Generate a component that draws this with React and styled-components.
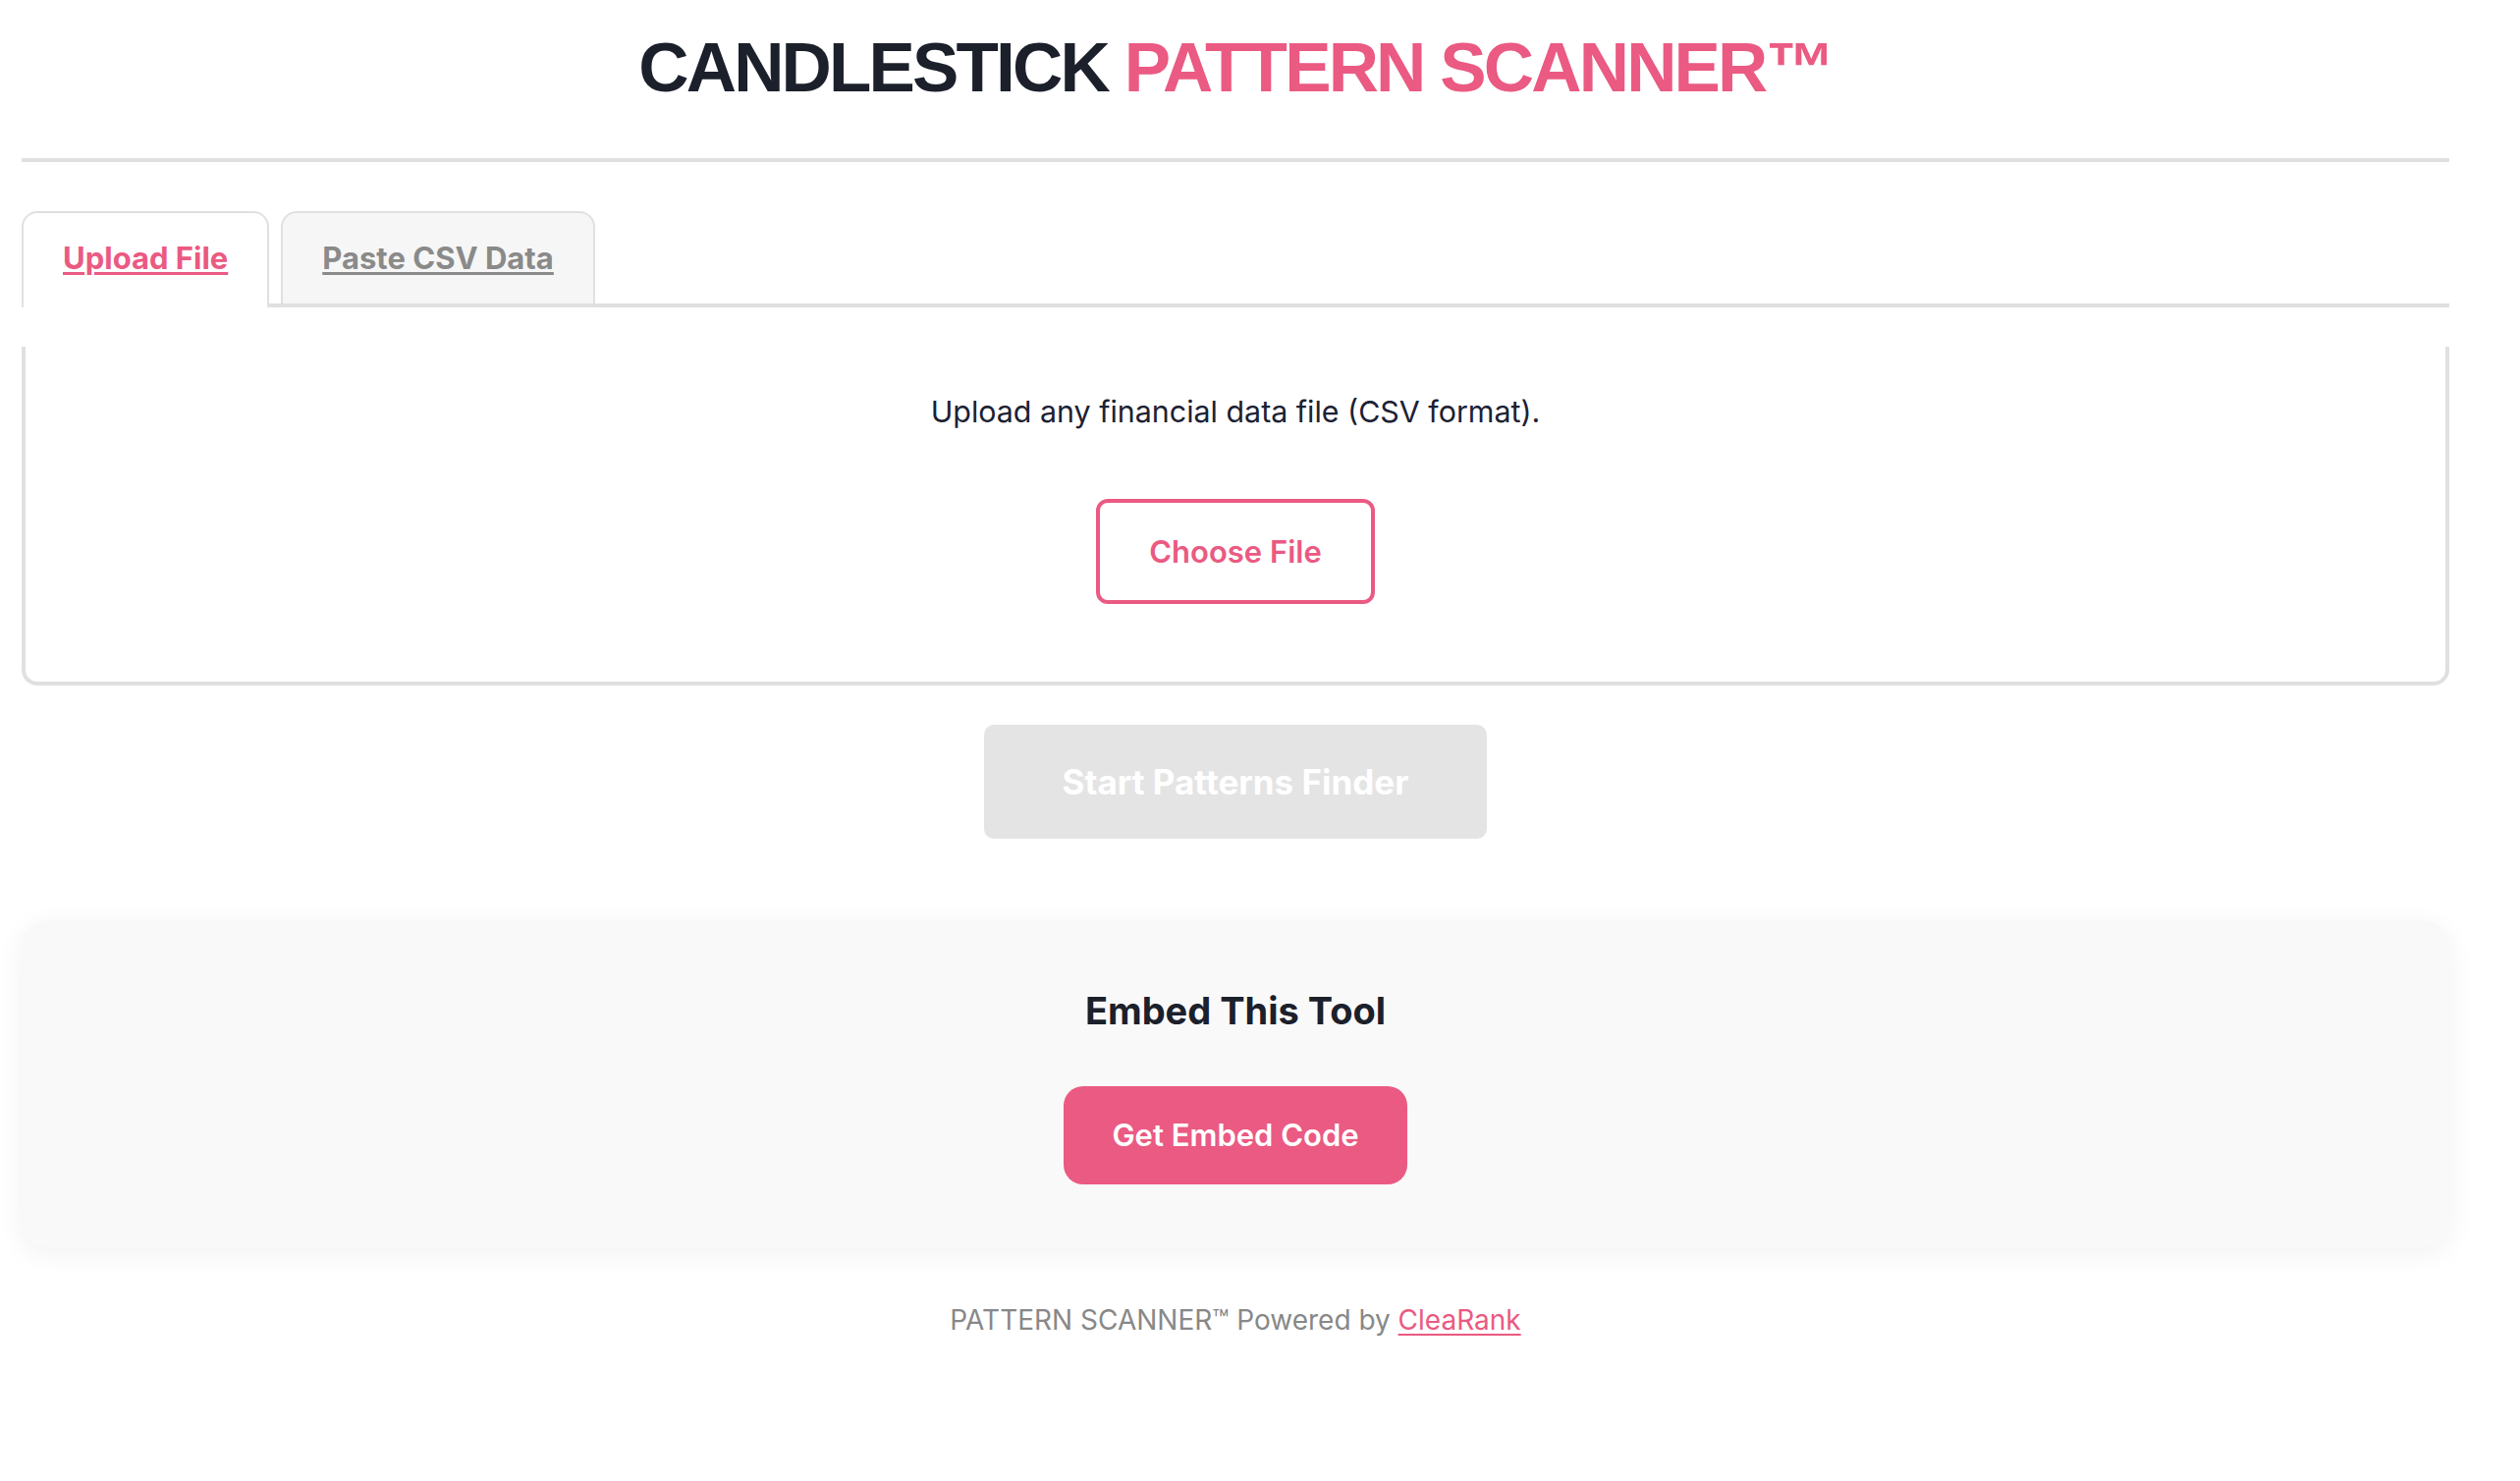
import { useState } from 'react';
import styled, { createGlobalStyle } from 'styled-components';

const GlobalStyle = createGlobalStyle`
  body {
    margin: 0;
    background: #ffffff;
    font-family: Inter, "Noto Sans", sans-serif;
    color: #1c2133;
  }
`;

const PINK = '#ea5a82';

export default function App () {
  const [tab, setTab] = useState('upload');

  return (
    <>
      <GlobalStyle />
      <Page>
        <Header>
          <Title>
            CANDLESTICK <Accent>PATTERN SCANNER™</Accent>
          </Title>
        </Header>

        <TabBar>
          <Tab active={tab === 'upload'} onClick={() => setTab('upload')}>Upload File</Tab>
          <Tab active={tab === 'paste'} onClick={() => setTab('paste')}>Paste CSV Data</Tab>
        </TabBar>

        <Panel>
          <Hint>Upload any financial data file (CSV format).</Hint>
          <FileButton>
            Choose File
            <input type='file' accept='.csv' hidden />
          </FileButton>
        </Panel>

        <StartBtn disabled>Start Patterns Finder</StartBtn>

        <EmbedBox>
          <EmbedTitle>Embed This Tool</EmbedTitle>
          <EmbedBtn>Get Embed Code</EmbedBtn>
        </EmbedBox>

        <Footer>
          PATTERN SCANNER™ Powered by <FooterLink href='#'>CleaRank</FooterLink>
        </Footer>
      </Page>
    </>
  )
}

const Page = styled.div`
  padding: 29px 72px 60px 22px;
`;

const Header = styled.header`
  border-bottom: 4px solid #e0e0e0;
  padding-bottom: 52px;
`;

const Title = styled.h1`
  margin: 0;
  text-align: center;
  font-family: "Liberation Sans", Arial, sans-serif;
  font-weight: 700;
  font-size: 71px;
  line-height: 80px;
  letter-spacing: -2.85px;
  color: #1b202b;
`;

const Accent = styled.span`
  color: ${PINK};
`;

const TabBar = styled.div`
  display: flex;
  align-items: flex-end;
  gap: 12px;
  margin-top: 50px;
  border-bottom: 4px solid #e0e0e0;
`;

const Tab = styled.button`
  font-family: Inter, sans-serif;
  font-size: 31px;
  font-weight: 700;
  line-height: 36px;
  padding: 28px 40px ${props => props.active ? '32px' : '28px'};
  margin-bottom: ${props => props.active ? '-4px' : '0'};
  border: 2px solid #e0e0e0;
  border-bottom: none;
  border-radius: 16px 16px 0 0;
  background: ${props => props.active ? '#ffffff' : '#f6f6f6'};
  color: ${props => props.active ? PINK : '#8a8a8a'};
  text-decoration: underline;
  text-decoration-thickness: 3px;
  text-underline-offset: 3px;
  cursor: pointer;
`;

const Panel = styled.section`
  margin-top: 40px;
  border: 4px solid #e0e0e0;
  border-top: none;
  border-radius: 0 0 16px 16px;
  padding: 42px 20px 79px;
  text-align: center;
`;

const Hint = styled.p`
  margin: 0 0 65px;
  font-size: 30.4px;
  line-height: 48px;
  color: #1c2133;
`;

const FileButton = styled.label`
  display: inline-block;
  padding: 30px 50px;
  border: 4px solid ${PINK};
  border-radius: 12px;
  background: #ffffff;
  color: ${PINK};
  font-size: 31px;
  font-weight: 600;
  line-height: 39px;
  cursor: pointer;
`;

const StartBtn = styled.button`
  display: block;
  margin: 40px auto 0;
  padding: 37px 80px;
  border: none;
  border-radius: 10px;
  background: #e4e4e4;
  color: #ffffff;
  font-family: Inter, sans-serif;
  font-size: 35px;
  font-weight: 700;
  line-height: 42px;
`;

const EmbedBox = styled.section`
  margin-top: 84px;
  padding: 68px 20px 64px;
  background: #f9f9f9;
  border-radius: 24px;
  box-shadow: 0 6px 28px rgba(0, 0, 0, 0.06);
  text-align: center;
`;

const EmbedTitle = styled.h3`
  margin: 0 0 54px;
  font-size: 38px;
  font-weight: 700;
  line-height: 46px;
  color: #1b202b;
`;

const EmbedBtn = styled.button`
  padding: 31px 49px;
  border: none;
  border-radius: 20px;
  background: ${PINK};
  color: #ffffff;
  font-family: Inter, sans-serif;
  font-size: 31px;
  font-weight: 600;
  line-height: 38px;
  cursor: pointer;
`;

const Footer = styled.footer`
  margin-top: 53px;
  text-align: center;
  font-size: 28px;
  line-height: 42px;
  color: #888888;
`;

const FooterLink = styled.a`
  color: ${PINK};
  text-decoration: underline;
  text-underline-offset: 4px;
`;
